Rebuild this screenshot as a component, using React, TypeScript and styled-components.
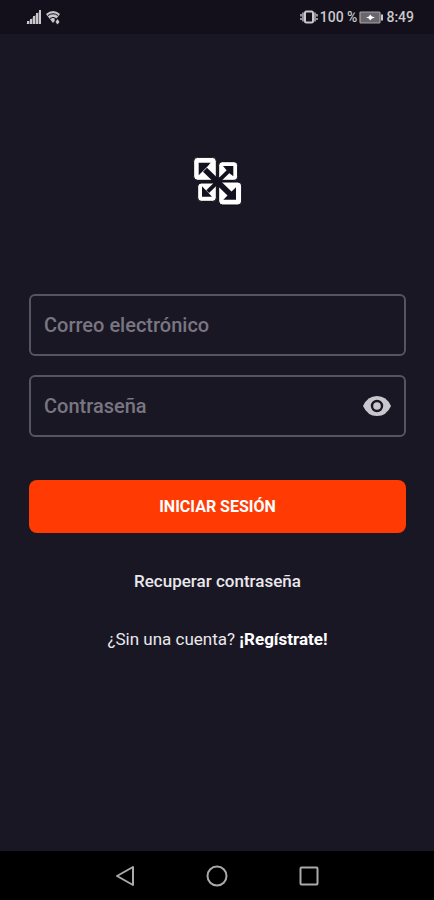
import React, { useState } from 'react';
import styled, { createGlobalStyle } from 'styled-components';

const GlobalStyle = createGlobalStyle`
  *, *::before, *::after { box-sizing: border-box; }
  body {
    margin: 0;
    background: #1a1724;
    font-family: Roboto, "Liberation Sans", sans-serif;
  }
`;

const Screen = styled.div`
  display: flex;
  flex-direction: column;
  min-height: 100vh;
  background: #1a1724;
  color: #e9e8ec;
`;

const StatusBar = styled.header`
  display: flex;
  align-items: center;
  justify-content: space-between;
  height: 34px;
  padding: 0 20px 0 26px;
  background: #13101b;
  color: #c9c8cc;
  font-size: 14px;
  font-weight: 500;
  line-height: 16px;
`;

const StatusGroup = styled.div<{ $gap: number }>`
  display: flex;
  align-items: center;
  gap: ${({ $gap }) => $gap}px;
`;

const Main = styled.main`
  display: flex;
  flex: 1;
  flex-direction: column;
  align-items: center;
  padding: 122px 28px 32px 29px;
`;

const Form = styled.form`
  display: flex;
  flex-direction: column;
  width: 100%;
  margin-top: 88px;
`;

const Field = styled.div`
  display: flex;
  align-items: center;
  height: 62px;
  margin-bottom: 19px;
  padding: 0 13px;
  border: 2px solid #57545f;
  border-radius: 6px;
  &:focus-within { border-color: #8b8894; }
`;

const Input = styled.input`
  flex: 1;
  min-width: 0;
  padding: 0;
  border: 0;
  outline: 0;
  background: transparent;
  color: #e9e8ec;
  font: 500 20px/24px Roboto, "Liberation Sans", sans-serif;
  &::placeholder { color: #797681; opacity: 1; }
`;

const IconButton = styled.button`
  display: flex;
  padding: 0;
  border: 0;
  background: transparent;
  color: #c9c7cd;
  cursor: pointer;
`;

const SubmitButton = styled.button`
  height: 53px;
  margin-top: 24px;
  border: 0;
  border-radius: 8px;
  background: #ff3a03;
  color: #fff;
  font: 700 16px/20px Roboto, "Liberation Sans", sans-serif;
  cursor: pointer;
`;

const Link = styled.a<{ $weight: number }>`
  color: ${({ $weight }) => ($weight > 500 ? '#fff' : '#e9e8ec')};
  font-weight: ${({ $weight }) => $weight};
  text-decoration: none;
`;

const Links = styled.nav`
  display: flex;
  flex-direction: column;
  align-items: center;
  gap: 38px;
  margin-top: 38px;
  font-size: 17px;
  line-height: 20px;
`;

const SignUp = styled.p`
  margin: 0;
  font-size: 17px;
`;

const NavBar = styled.footer`
  display: grid;
  grid-template-columns: repeat(3, 24px);
  justify-content: center;
  align-items: center;
  gap: 68px;
  height: 49px;
  background: #000;
`;

const SignalIcon = () => (
  <svg width="16" height="16" viewBox="0 0 16 16" fill="currentColor" aria-hidden="true">
    <path d="M0 15L15 1V15z" opacity="0.45" />
    <path d="M1 12h2v3H1zM4 10h2v5H4zM7 7h2v8H7zM10 4h2v11h-2zM13 1h2v14h-2z" />
  </svg>
);

const WifiIcon = () => (
  <svg width="17" height="16" viewBox="0 0 17 16" aria-hidden="true">
    <path d="M1 5Q8 -1 15 5L8 14Z" fill="currentColor" />
    <path d="M3 6.5Q8 3 13 6.5M5 9.5Q8 7.2 11 9.5" fill="none" stroke="#13101b" strokeWidth="1" />
    <path d="M9.5 9.5h6v6h-5z" fill="#13101b" />
    <path d="M12.5 10l2 3-2 2.5-2-2.5z" fill="currentColor" />
  </svg>
);

const VibrateIcon = () => (
  <svg width="18" height="14" viewBox="0 0 18 14" fill="none" stroke="currentColor" aria-hidden="true">
    <rect x="5" y="1.5" width="8" height="11" rx="1.5" strokeWidth="2" />
    <path d="M3 2.5v9M15 2.5v9M1 4v2.5M1 8v2M17 4v2.5M17 8v2" strokeWidth="1.4" />
  </svg>
);

const BatteryIcon = () => (
  <svg width="25" height="13" viewBox="0 0 25 13" aria-hidden="true">
    <rect x="1" y="1" width="20" height="11" rx="1" fill="#69676d" stroke="#a5a4a8" strokeWidth="1.2" />
    <path d="M22 3.5h2v6h-2z" fill="#c9c8cc" />
    <path d="M7 6.5l3-1 1-2 2 2 3 1-3 1-2 2-1-2z" fill="#fff" />
  </svg>
);

const Logo = () => (
  <svg width="52" height="50" viewBox="66 62 156 150" role="img" aria-label="Logo">
    <g fill="#fff" stroke="#0b0912" strokeWidth="3">
      <rect x="71" y="66" width="68" height="69" rx="12" />
      <rect x="146" y="79" width="57" height="56" rx="11" />
      <rect x="83" y="143" width="56" height="55" rx="11" />
      <rect x="146" y="140" width="69" height="69" rx="12" />
    </g>
    <path d="M105 103L180 176" stroke="#14111e" strokeWidth="17" />
    <path d="M175 108L113 169" stroke="#14111e" strokeWidth="12" />
    <g fill="#14111e">
      <path d="M86 82h36l-9 11-15 15-12 12z" />
      <path d="M159 92h31v31l-10-8-11-11z" />
      <path d="M96 153l8 8 11 11 11 12H96z" />
      <path d="M198 156v37h-38l11-11 16-16z" />
      <path d="M127 138l15-14 16 14-15 17z" />
    </g>
  </svg>
);

const EyeIcon = () => (
  <svg width="28" height="20" viewBox="0 0 28 20" aria-hidden="true">
    <path d="M0 10Q4.5 0 14 0t14 10q-4.5 10-14 10T0 10z" fill="currentColor" />
    <circle cx="14" cy="10" r="5" fill="none" stroke="#1a1724" strokeWidth="2.4" />
  </svg>
);

const NavIcon = ({ children }: { children: React.ReactNode }) => (
  <svg width="24" height="24" viewBox="0 0 24 24" fill="none" stroke="#aaa" strokeWidth="2" strokeLinejoin="round" aria-hidden="true">
    {children}
  </svg>
);

export default function App() {
  const [visible, setVisible] = useState(false);

  return (
    <>
      <GlobalStyle />
      <Screen>
        <StatusBar>
          <StatusGroup $gap={3}>
            <SignalIcon />
            <WifiIcon />
          </StatusGroup>
          <StatusGroup $gap={2}>
            <VibrateIcon />
            <span>100 %</span>
            <BatteryIcon />
            <span>8:49</span>
          </StatusGroup>
        </StatusBar>
        <Main>
          <Logo />
          <Form onSubmit={(event) => event.preventDefault()}>
            <Field>
              <Input type="email" aria-label="Correo electrónico" placeholder="Correo electrónico" />
            </Field>
            <Field>
              <Input type={visible ? 'text' : 'password'} aria-label="Contraseña" placeholder="Contraseña" />
              <IconButton type="button" aria-label="Mostrar contraseña" aria-pressed={visible} onClick={() => setVisible(!visible)}>
                <EyeIcon />
              </IconButton>
            </Field>
            <SubmitButton type="submit">INICIAR SESIÓN</SubmitButton>
          </Form>
          <Links>
            <Link href="#recuperar" $weight={500}>Recuperar contraseña</Link>
            <SignUp>
              ¿Sin una cuenta? <Link href="#registro" $weight={700}>¡Regístrate!</Link>
            </SignUp>
          </Links>
        </Main>
        <NavBar>
          <IconButton type="button" aria-label="Atrás">
            <NavIcon><path d="M20 3v18L4 12z" /></NavIcon>
          </IconButton>
          <IconButton type="button" aria-label="Inicio">
            <NavIcon><circle cx="12" cy="12" r="9.5" /></NavIcon>
          </IconButton>
          <IconButton type="button" aria-label="Recientes">
            <NavIcon><rect x="3.5" y="3.5" width="17" height="17" rx="1" /></NavIcon>
          </IconButton>
        </NavBar>
      </Screen>
    </>
  );
}
